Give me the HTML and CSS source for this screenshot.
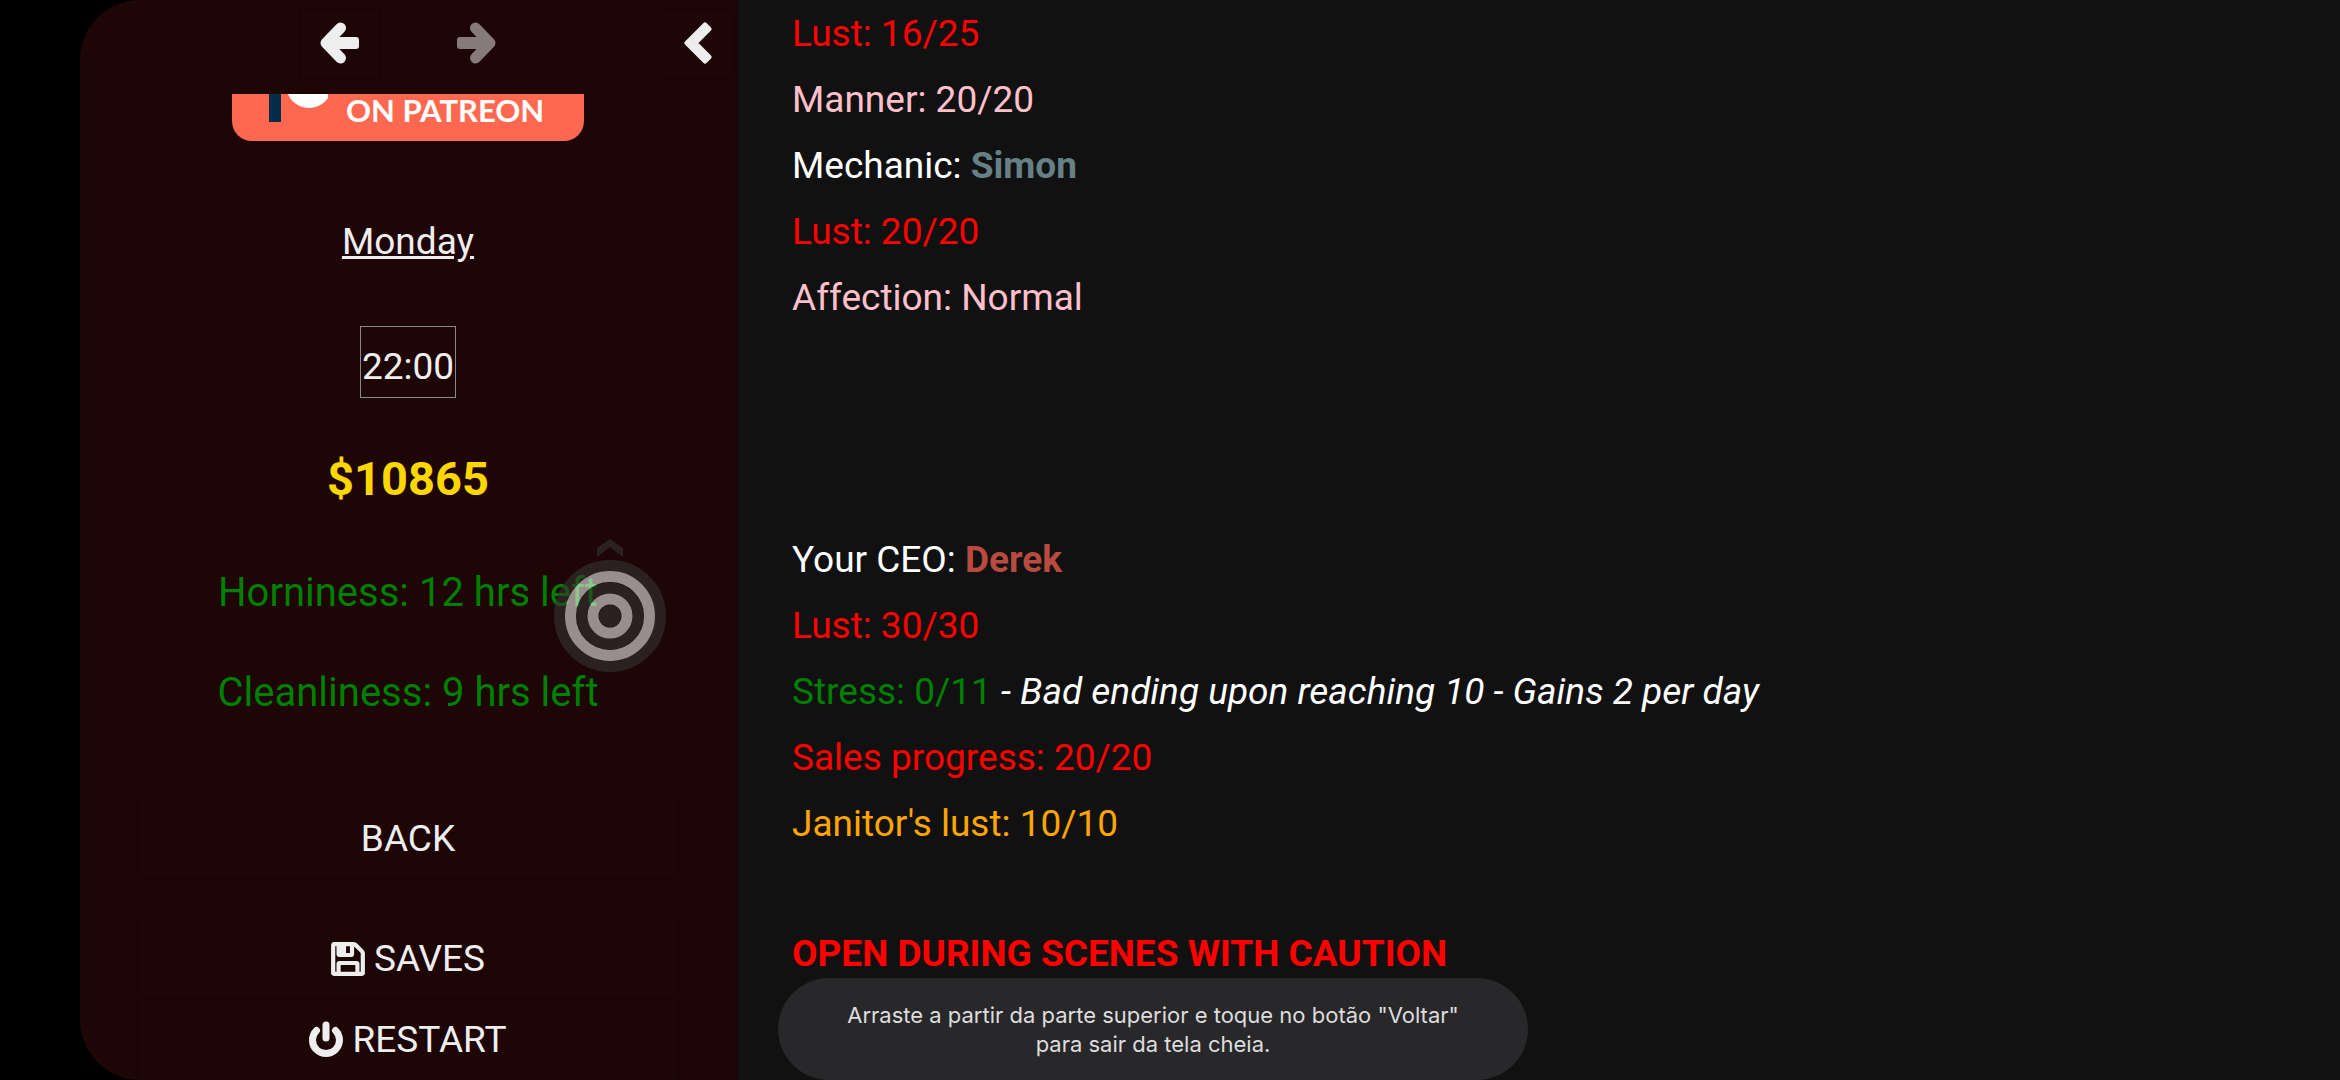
FILE: index.html
```html
<!DOCTYPE html>
<html lang="en">
<head>
  <meta charset="utf-8">
  <meta name="viewport" content="width=device-width, initial-scale=1">
  <title>Stats</title>
  <link rel="stylesheet" href="styles.css">
</head>
<body>
  <aside class="ui-bar">
    <div class="ui-bar-tray">
      <div class="history">
        <button class="tray-button" aria-label="Go back">
          <svg class="arrow" viewBox="0 0 40 42"><path d="M20.5 6 L6 21 L20.5 36" fill="none" stroke="#eee" stroke-width="11" stroke-linecap="round" stroke-linejoin="round" /><rect x="8" y="15" width="31" height="12" rx="3" fill="#eee" /></svg>
        </button>
        <button class="tray-button" aria-label="Go forward" disabled>
          <svg class="arrow" viewBox="0 0 40 42"><path d="M19.5 6 L34 21 L19.5 36" fill="none" stroke="#eee" stroke-width="11" stroke-linecap="round" stroke-linejoin="round" /><rect x="1" y="15" width="31" height="12" rx="3" fill="#eee" /></svg>
        </button>
      </div>
      <button class="tray-button toggle" aria-label="Toggle the UI bar">
        <svg class="chevron" viewBox="0 0 28 42"><path d="M3 21 L21 3 L25 7 L11 21 L25 35 L21 39 Z" fill="#eee" stroke="#eee" stroke-width="5" stroke-linejoin="round" /></svg>
      </button>
    </div>

    <div class="ui-bar-body">
      <a class="patreon" href="#">
        <svg class="patreon-logo" viewBox="0 0 64 47"><rect x="5" y="0" width="12" height="28" fill="#052d49" /><circle cx="45" cy="-9" r="23" fill="#fff" /></svg>
        <span>ON PATREON</span>
      </a>

      <div class="day">Monday</div>
      <div class="clock">22:00</div>
      <div class="money">$10865</div>
      <div class="need">Horniness: 12 hrs left</div>
      <div class="need">Cleanliness: 9 hrs left</div>

      <nav class="menu">
        <button class="menu-item">BACK</button>
      </nav>
      <nav class="menu">
        <button class="menu-item">
          <svg class="icon save" viewBox="-40 -40 1616 1616"><path d="M384 1408h768v-384h-768v384zM1280 1408h128v-896q0-14-10-38.500t-20-34.500l-281-281q-10-10-34-20t-39-10v416q0 40-28 68t-68 28h-576q-40 0-68-28t-28-68v-416h-128v1280h128v-416q0-40 28-68t68-28h832q40 0 68 28t28 68v416zM896 480v-320q0-13-9.500-22.500t-22.500-9.500h-192q-13 0-22.500 9.500t-9.500 22.500v320q0 13 9.500 22.500t22.500 9.500h192q13 0 22.500-9.500t9.500-22.500zM1536 512v928q0 40-28 68t-68 28h-1344q-40 0-68-28t-28-68v-1344q0-40 28-68t68-28h928q40 0 88 20t76 48l280 280q28 28 48 76t20 88z" /></svg>
          SAVES
        </button>
        <button class="menu-item">
          <svg class="icon power" viewBox="0 0 34 38"><path d="M7.500 9.500 A13.500 13.500 0 1 0 26.500 9.500" /><path d="M17 4 V17" /></svg>
          RESTART
        </button>
      </nav>
    </div>
  </aside>

  <main class="passage">
    <section class="stats">
      <div class="red">Lust: 16/25</div>
      <div class="pink">Manner: 20/20</div>
      <div>Mechanic: <b class="simon">Simon</b></div>
      <div class="red">Lust: 20/20</div>
      <div class="pink">Affection: Normal</div>
    </section>
    <section class="stats ceo">
      <div>Your CEO: <b class="derek">Derek</b></div>
      <div class="red">Lust: 30/30</div>
      <div><span class="green">Stress: 0/11</span> <i>- Bad ending upon reaching 10 - Gains 2 per day</i></div>
      <div class="red">Sales progress: 20/20</div>
      <div class="orange">Janitor's lust: 10/10</div>
    </section>
    <div class="warning">OPEN DURING SCENES WITH CAUTION</div>
  </main>

  <!-- floating pointer -->
  <svg class="pointer" viewBox="0 0 116 136">
    <path d="M45 19 V10 L58 1 L71 10 V19 L58 9 Z" fill="#333" fill-opacity=".6" />
    <g fill="none" stroke="#333" stroke-opacity=".6">
      <circle cx="58" cy="78" r="50.5" stroke-width="11" />
      <circle cx="58" cy="78" r="28" stroke-width="11" />
    </g>
    <circle cx="58" cy="78" r="11" fill="#333" fill-opacity=".6" />
    <g fill="none" stroke="#fff" stroke-opacity=".55">
      <circle cx="58" cy="78" r="39.5" stroke-width="11" />
      <circle cx="58" cy="78" r="17" stroke-width="11" />
    </g>
  </svg>

  <div class="toast" role="status">Arraste a partir da parte superior e toque no botão "Voltar" para sair da tela cheia.</div>
</body>
</html>
```

FILE: styles.css
```css
* {
  box-sizing: border-box;
}
body {
  display: flex;
  height: 100vh;
  margin: 0;
  padding-left: 80px;
  overflow: hidden;
  background: #000;
  color: #fff;
  font: 37px/66px Roboto, sans-serif;
}
button {
  font: inherit;
  color: inherit;
  background: none;
  border: 2px solid #190407;
  padding: 0;
  cursor: pointer;
}

/* sidebar */
.ui-bar {
  flex: 0 0 658px;
  display: flex;
  flex-direction: column;
  overflow: hidden;
  background: #1e0506;
  color: #eee;
  border-right: 2px solid #190407;
  border-radius: 60px 0 0 60px;
}
.ui-bar-tray {
  flex: none;
  display: flex;
  justify-content: flex-end;
  gap: 143px;
  height: 94px;
  padding-top: 8px;
}
.history {
  display: flex;
  gap: 54px;
}
.tray-button {
  display: flex;
  align-items: center;
  justify-content: center;
  width: 82px;
  height: 72px;
  padding-bottom: 2px;
}
.tray-button:disabled {
  border-color: transparent;
  opacity: 0.5;
  cursor: default;
}
.toggle {
  width: 76px;
}
.arrow {
  width: 40px;
  height: 42px;
}
.chevron {
  width: 28px;
  height: 42px;
}
.ui-bar-body {
  flex: 1;
  display: flex;
  flex-direction: column;
  align-items: center;
  padding: 0 56px;
  min-height: 0;
}
.patreon {
  flex: none;
  display: flex;
  width: 352px;
  height: 47px;
  padding-left: 32px;
  gap: 18px;
  background: #ff6850;
  border-radius: 0 0 20px 20px;
  color: #fff;
  font: bold 31px/32px Lato, sans-serif;
  text-decoration: none;
}
.patreon-logo {
  width: 64px;
  height: 47px;
}
.day {
  margin-top: 68px;
  text-decoration: underline;
}
.clock {
  margin-top: 51px;
  padding: 8px 1px 0;
  height: 72px;
  line-height: 64px;
  border: 1px solid #888;
}
.money {
  margin: 48px 0;
  color: #ffd700;
  font-size: 47px;
  font-weight: bold;
}
.need {
  color: #008000;
  font-size: 40px;
  margin-bottom: 34px;
}
.menu {
  display: flex;
  flex-direction: column;
  align-self: stretch;
  margin-top: 37px;
}
.menu-item {
  display: flex;
  align-items: center;
  justify-content: center;
  gap: 9px;
  height: 83px;
  flex: none;
}
.menu-item + .menu-item {
  margin-top: -2px;
}
.icon {
  width: 34px;
  height: 38px;
}
.save path {
  fill: #eee;
  stroke: #eee;
  stroke-width: 70;
}
.power path {
  fill: none;
  stroke: #eee;
  stroke-width: 7;
  stroke-linecap: round;
}

/* passage */
.passage {
  flex: 1;
  min-width: 0;
  padding: 1px 0 0 54px;
  background: #111;
}
.ceo {
  margin-top: 196px;
}
.warning {
  margin-top: 64px;
  color: #f00;
  font-weight: bold;
}
.red {
  color: #f00;
}
.pink {
  color: #ffc0cb;
}
.green {
  color: #008000;
}
.orange {
  color: #ffa500;
}
.simon {
  color: #668086;
}
.derek {
  color: #b94a3f;
}

/* overlays */
.pointer {
  position: absolute;
  left: 552px;
  top: 538px;
  width: 116px;
  height: 136px;
  pointer-events: none;
}
.toast {
  position: absolute;
  left: 778px;
  bottom: 0;
  width: 750px;
  padding: 23px 60px 21px;
  background: #28282a;
  border-radius: 51px;
  color: #ddd;
  font: 22px/29px Inter, sans-serif;
  text-align: center;
}
```
